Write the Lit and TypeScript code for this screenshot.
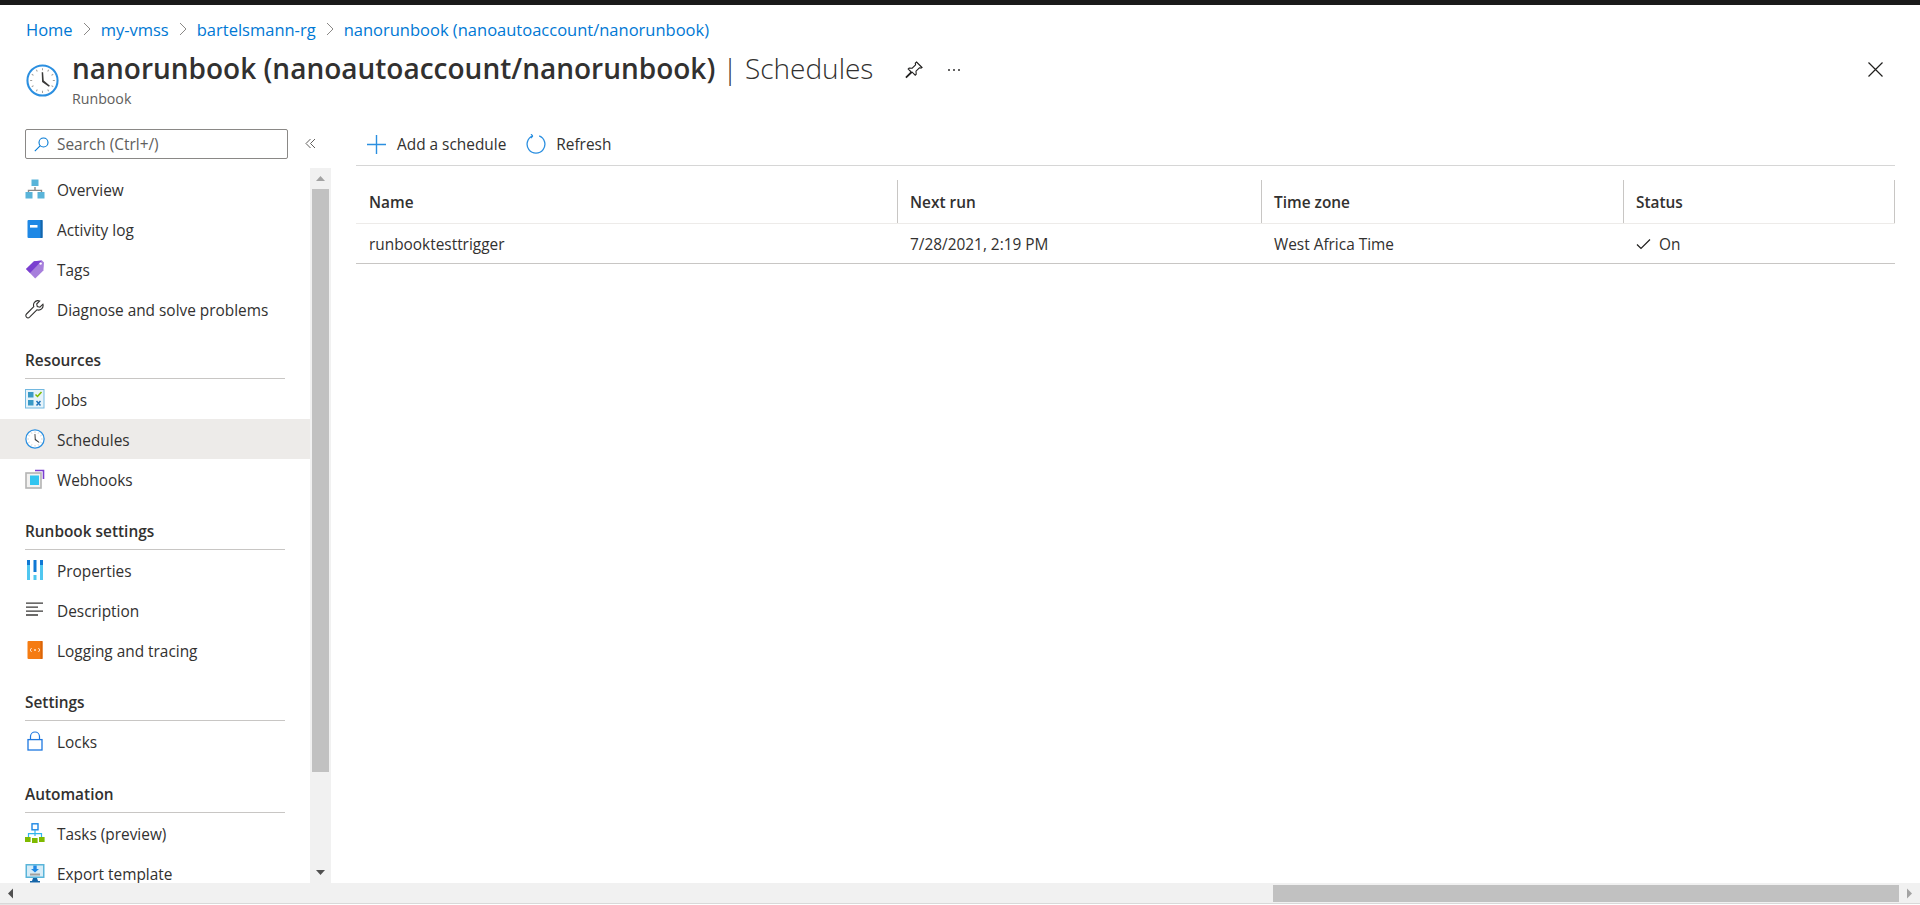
import { LitElement, html, css, svg } from 'lit';
import { customElement } from 'lit/decorators.js';

const clock = (s: number) => html`<svg width=${s} height=${s} viewBox="0 0 32 32">
  <circle cx="16" cy="16" r="14.6" fill="#fff" stroke="#2b8fe0" stroke-width="2"></circle>
  <path d="M16 4v2M16 26v2M4 16h2M26 16h2M10 5.6l1 1.7M22 5.6l-1 1.7M5.6 10l1.7 1M26.4 10l-1.7 1M5.6 22l1.7-1M26.4 22l-1.7-1M10 26.4l1-1.7M22 26.4l-1-1.7" stroke="#a19f9d" stroke-width="1"></path>
  <path d="M15.2 8h1.4l.6 8 6 5-1 1-6.6-4.6z" fill="#3b3a39"></path>
</svg>`;

const icons: Record<string, unknown> = {
  overview: html`<svg width="20" height="20" viewBox="0 0 20 20">
    <path d="M10 8v4M3.5 14v-2.6h13V14" fill="none" stroke="#8a8886" stroke-width="1.4"></path>
    <rect x="6.5" y="0.5" width="7" height="6.5" fill="#59b4d9"></rect>
    <rect x="0.5" y="13" width="7" height="6.5" fill="#59b4d9"></rect>
    <rect x="12.5" y="13" width="7" height="6.5" fill="#59b4d9"></rect>
  </svg>`,
  activity: html`<svg width="20" height="20" viewBox="0 0 20 20">
    <rect x="2.5" y="1" width="15" height="18" rx="1" fill="#1e88e5"></rect>
    <rect x="15.5" y="1" width="2" height="18" fill="#1565a8"></rect>
    <rect x="5" y="6" width="7.5" height="2.6" fill="#fff"></rect>
  </svg>`,
  tags: html`<svg width="20" height="20" viewBox="0 0 20 20">
    <path d="M1 10 9 2.2 17 1.6 19 3.6 18.4 11.6 10.2 19.4z" fill="#a77fdc"></path>
    <path d="M1 10 9 2.2 17 1.6 5 14z" fill="#7a3fd0"></path>
    <circle cx="15.6" cy="4.6" r="1.2" fill="#fff"></circle>
  </svg>`,
  wrench: html`<svg width="20" height="20" viewBox="0 0 20 20">
    <path d="M12.4 1.6a4.6 4.6 0 0 0-3.6 6.1L1.5 15a2.2 2.2 0 0 0 3.1 3.2l7.3-7.4a4.6 4.6 0 0 0 6-5.6l-3 3-2.6-.6-.6-2.6 3-3a4.6 4.6 0 0 0-2.3-.4z" fill="none" stroke="#323130" stroke-width="1.1"></path>
  </svg>`,
  jobs: html`<svg width="20" height="20" viewBox="0 0 20 20">
    <rect x="0.5" y="0.5" width="18.5" height="18.5" fill="#e6f3fa" stroke="#72b8e0"></rect>
    <rect x="3" y="3" width="5.5" height="5.5" fill="#3999c6"></rect>
    <rect x="3" y="11" width="5.5" height="5.5" fill="#3999c6"></rect>
    <path d="M10.5 5.5l2 2 4-4.5" fill="none" stroke="#7fba00" stroke-width="1.5"></path>
    <path d="M11.5 12l4 4.5M15.5 12l-4 4.5" stroke="#2072b8" stroke-width="1.5"></path>
  </svg>`,
  schedules: clock(20),
  webhooks: html`<svg width="20" height="20" viewBox="0 0 20 20">
    <path d="M10 1.5h8.5V10" fill="none" stroke="#7a3fd0" stroke-width="1.6"></path>
    <rect x="1" y="4" width="15" height="15" fill="#f3f2f1" stroke="#b3b3b3" stroke-width="1.6"></rect>
    <rect x="5" y="6.5" width="9" height="9.5" fill="#32c5f0"></rect>
  </svg>`,
  properties: html`<svg width="20" height="20" viewBox="0 0 20 20">
    <rect x="2" y="0" width="3" height="20" fill="#50c7f0"></rect>
    <rect x="2" y="0" width="3" height="5" fill="#0f78d4"></rect>
    <rect x="8.5" y="0" width="3" height="12" fill="#0f78d4"></rect>
    <rect x="8.5" y="15" width="3" height="5" fill="#50c7f0"></rect>
    <rect x="15" y="0" width="3" height="20" fill="#50c7f0"></rect>
    <rect x="15" y="0" width="3" height="5" fill="#0f78d4"></rect>
  </svg>`,
  description: html`<svg width="20" height="20" viewBox="0 0 20 20">
    <path d="M1 3.2h17M1 7.2h12M1 11.2h17M1 15h12" stroke="#3b3a39" stroke-width="1.3"></path>
  </svg>`,
  logging: html`<svg width="20" height="20" viewBox="0 0 20 20">
    <rect x="2.5" y="1" width="15" height="18" rx="1" fill="#f57c13"></rect>
    <rect x="15.5" y="1" width="2" height="18" fill="#d9650a"></rect>
    <path d="M6.6 8l-1.4 2 1.4 2M13.4 8l1.4 2-1.4 2" fill="none" stroke="#ffe3c7" stroke-width="1"></path>
    <circle cx="10" cy="10" r="1" fill="#ffe3c7"></circle>
  </svg>`,
  locks: html`<svg width="20" height="20" viewBox="0 0 20 20">
    <path d="M5.5 9V5.500a4.500 4.500 0 0 1 9 0V9" fill="none" stroke="#1e78e0" stroke-width="1.200"></path>
    <rect x="3" y="8.600" width="14" height="10.400" fill="#fff" stroke="#1e78e0" stroke-width="1.300"></rect>
  </svg>`,
  tasks: html`<svg width="20" height="20" viewBox="0 0 20 20">
    <rect x="7" y="0.800" width="6" height="6" fill="#fff" stroke="#1e88e5" stroke-width="1.400"></rect>
    <path d="M10 7v6M3.500 14v-3.400h13V14" fill="none" stroke="#32b5ea" stroke-width="1.200"></path>
    <rect x="0" y="14" width="5.600" height="5" fill="#7fba00"></rect>
    <rect x="7" y="15" width="5.600" height="5" fill="#7fba00"></rect>
    <rect x="14" y="14" width="5.600" height="5" fill="#7fba00"></rect>
  </svg>`,
  export: html`<svg width="20" height="20" viewBox="0 0 20 20">
    <rect x="0.500" y="1" width="19" height="14" fill="#59b4d9"></rect>
    <rect x="2" y="2.500" width="16" height="11" fill="#d6ecf7"></rect>
    <path d="M8.300 2.500h3.400v3.600h2.300L10 9.600 6 6.100h2.300z" fill="#1e88e5"></path>
    <rect x="5" y="10.500" width="10" height="2" fill="#a19f9d"></rect>
    <path d="M8 15h4l1 3H7z" fill="#1565a8"></path>
    <rect x="5" y="18" width="10" height="1.500" fill="#1565a8"></rect>
  </svg>`,
};

type Entry = { section?: string; h?: number; label?: string; icon?: string; active?: boolean };

const nav: Entry[] = [
  { label: 'Overview', icon: 'overview' },
  { label: 'Activity log', icon: 'activity' },
  { label: 'Tags', icon: 'tags' },
  { label: 'Diagnose and solve problems', icon: 'wrench' },
  { section: 'Resources', h: 50 },
  { label: 'Jobs', icon: 'jobs' },
  { label: 'Schedules', icon: 'schedules', active: true },
  { label: 'Webhooks', icon: 'webhooks' },
  { section: 'Runbook settings', h: 51 },
  { label: 'Properties', icon: 'properties' },
  { label: 'Description', icon: 'description' },
  { label: 'Logging and tracing', icon: 'logging' },
  { section: 'Settings', h: 51 },
  { label: 'Locks', icon: 'locks' },
  { section: 'Automation', h: 52 },
  { label: 'Tasks (preview)', icon: 'tasks' },
  { label: 'Export template', icon: 'export' },
];

const crumbs = ['Home', 'my-vmss', 'bartelsmann-rg', 'nanorunbook (nanoautoaccount/nanorunbook)'];

const arrow = (d: string, fill = '#a3a3a3') =>
  html`<svg width="11" height="11" viewBox="0 0 11 11">${svg`<path d=${d} fill=${fill}></path>`}</svg>`;

@customElement('app-root')
export class AppRoot extends LitElement {
  static styles = css`
    :host {
      display: flex;
      flex-direction: column;
      height: 905px;
      overflow: hidden;
      background: #fff;
      color: #323130;
      font-family: 'Open Sans', 'Noto Sans', sans-serif;
      font-size: 15.4px;
    }
    .topbar { height: 5px; background: #1a1a1a; flex: none; }

    .crumbs {
      flex: none;
      height: 48px;
      padding-left: 26px;
      display: flex;
      align-items: center;
      gap: 10px;
      color: #0078d4;
      font-size: 16.5px;
    }
    .crumbs svg { flex: none; }

    .head {
      flex: none;
      height: 66px;
      display: flex;
      padding-left: 26px;
      position: relative;
    }
    .head .ico { margin-top: 11px; flex: none; height: 32px; }
    .titles { margin-left: 13px; }
    .title {
      font-size: 28px;
      line-height: 34px;
      white-space: nowrap;
      margin-top: -2px;
    }
    .title b { font-weight: 600; }
    .title span { font-weight: 300; }
    .sub { font-size: 14.2px; line-height: 16px; color: #605e5c; margin-top: 6px; }
    .head-acts { display: flex; align-items: flex-start; gap: 24px; margin-left: 32px; padding-top: 8px; }
    .close { margin-left: auto; margin-right: 37px; padding-top: 8px; }

    .body { flex: 1; display: flex; min-height: 0; }

    .side { width: 331px; flex: none; display: flex; flex-direction: column; min-height: 0; }
    .search-row { flex: none; height: 49px; box-sizing: border-box; padding: 10px 0 0 25px; display: flex; align-items: flex-start; }
    .search {
      width: 263px;
      height: 30px;
      box-sizing: border-box;
      border: 1px solid #8a8886;
      border-radius: 2px;
      display: flex;
      align-items: center;
      gap: 8px;
      padding-left: 8px;
      color: #605e5c;
    }
    .collapse { margin: 9px 0 0 17px; }

    .scroller { flex: 1; display: flex; min-height: 0; }
    .list { width: 310px; flex: none; overflow: hidden; padding-top: 1px; }
    .item {
      height: 40px;
      display: flex;
      align-items: center;
      padding-left: 25px;
      gap: 12px;
      white-space: nowrap;
    }
    .item span { position: relative; top: 1px; }
    .item svg { flex: none; width: 20px; height: 20px; }
    .item.active { background: #edebe9; }
    .section {
      margin-left: 25px;
      width: 260px;
      box-sizing: border-box;
      border-bottom: 1px solid #c8c6c4;
      display: flex;
      align-items: flex-end;
      padding-bottom: 7px;
      font-weight: 600;
    }

    .vbar { width: 21px; flex: none; background: #f1f1f1; display: flex; flex-direction: column; align-items: center; }
    .vbar .btn { height: 21px; flex: none; display: flex; align-items: center; justify-content: center; }
    .vbar .thumb { width: 17px; height: 583px; background: #c1c1c1; flex: none; }
    .vbar .rest { flex: 1; }

    .main { flex: 1; min-width: 0; margin: 0 25px; display: flex; flex-direction: column; }
    .toolbar {
      flex: none;
      height: 47px;
      box-sizing: border-box;
      border-bottom: 1px solid #d6d6d6;
      display: flex;
      align-items: flex-start;
      padding: 15px 0 0 11px;
    }
    .tool { display: flex; align-items: center; gap: 11px; height: 20px; }
    .tool + .tool { margin-left: 20px; gap: 10px; }

    .grid { display: grid; grid-template-columns: 542px 364px 362px 271px; }
    .th {
      height: 58px;
      box-sizing: border-box;
      border-bottom: 1px solid #edebe9;
      display: flex;
      align-items: center;
      padding: 15px 0 0 13px;
      font-weight: 600;
      position: relative;
    }
    .th + .th { padding-left: 12px; }
    .th::after {
      content: '';
      position: absolute;
      right: 0;
      bottom: 0;
      height: 43px;
      width: 1px;
      background: #c8c6c4;
    }
    .td {
      height: 40px;
      box-sizing: border-box;
      border-bottom: 1px solid #c8c6c4;
      display: flex;
      align-items: center;
      padding: 1px 0 0 13px;
      gap: 8px;
    }
    .td + .td { padding-left: 12px; }

    .hbar {
      flex: none;
      height: 20px;
      background: #f1f1f1;
      display: flex;
      align-items: center;
    }
    .hbar .btn { width: 21px; display: flex; justify-content: center; flex: none; }
    .hbar .track { flex: 1; padding-left: 1252px; }
    .hbar .thumb { height: 17px; background: #c1c1c1; }
    .strip { flex: none; height: 2px; display: flex; background: #fff; border-top: 1px solid #d9d9d9; box-sizing: border-box; }
    .strip i { width: 60px; background: #e6e6e6; }
  `;

  renderNav(n: Entry) {
    if (n.section) {
      return html`<div class="section" style="height:${n.h}px">${n.section}</div>`;
    }
    return html`<div class="item ${n.active ? 'active' : ''}">${icons[n.icon!]}<span>${n.label}</span></div>`;
  }

  render() {
    return html`
      <div class="topbar"></div>
      <div class="crumbs">
        ${crumbs.map(
          (c, i) => html`${i > 0
            ? html`<svg width="8" height="14" viewBox="0 0 8 14"><path d="M1 1l6 6-6 6" fill="none" stroke="#8a8886" stroke-width="1"></path></svg>`
            : ''}<span>${c}</span>`
        )}
      </div>
      <div class="head">
        <div class="ico">${clock(33)}</div>
        <div class="titles">
          <div class="title"><b>nanorunbook (nanoautoaccount/nanorunbook)</b><span> | Schedules</span></div>
          <div class="sub">Runbook</div>
        </div>
        <div class="head-acts">
          <svg width="18" height="18" viewBox="0 0 18 18"><path d="M11.500 1l5.500 5.500-1 .6-1.600-.3-3.400 3.400.2 3-1 1-3-3L1.500 16.500l-.4-.4L6.200 11l-3-3 1-1 3 .2 3.400-3.400-.3-1.600z" fill="none" stroke="#201f1e" stroke-width="1.100"></path></svg>
          <svg width="14" height="18" viewBox="0 0 14 18"><g fill="#323130"><circle cx="2" cy="9" r="1"></circle><circle cx="7" cy="9" r="1"></circle><circle cx="12" cy="9" r="1"></circle></g></svg>
        </div>
        <div class="close">
          <svg width="15" height="15" viewBox="0 0 15 15"><path d="M.5.5l14 14M14.500.5l-14 14" stroke="#201f1e" stroke-width="1.200"></path></svg>
        </div>
      </div>
      <div class="body">
        <div class="side">
          <div class="search-row">
            <div class="search">
              <svg width="15" height="15" viewBox="0 0 15 15"><circle cx="9.500" cy="5.500" r="4.500" fill="none" stroke="#0078d4" stroke-width="1.100"></circle><path d="M6.300 8.700L.8 14.200" stroke="#0078d4" stroke-width="1.100"></path></svg>
              <span>Search (Ctrl+/)</span>
            </div>
            <svg class="collapse" width="11" height="11" viewBox="0 0 11 11"><path d="M5.500 1l-4.500 4.500 4.500 4.500M10 1L5.500 5.500 10 10" fill="none" stroke="#605e5c" stroke-width="1"></path></svg>
          </div>
          <div class="scroller">
            <div class="list">${nav.map(n => this.renderNav(n))}</div>
            <div class="vbar">
              <div class="btn">${arrow('M1 8L5.500 3 10 8z')}</div>
              <div class="thumb"></div>
              <div class="rest"></div>
              <div class="btn">${arrow('M1 3l4.500 5L10 3z', '#505050')}</div>
            </div>
          </div>
        </div>
        <div class="main">
          <div class="toolbar">
            <div class="tool">
              <svg width="19" height="19" viewBox="0 0 19 19"><path d="M9.500 0v19M0 9.500h19" stroke="#2b8fe0" stroke-width="1.400"></path></svg>
              <span>Add a schedule</span>
            </div>
            <div class="tool">
              <svg width="20" height="20" viewBox="0 0 20 20"><path d="M13.200 1.900a8.900 8.900 0 1 1-6.400 0" fill="none" stroke="#2b8fe0" stroke-width="1.300"></path><path d="M6.800 1.900L5 .2M6.800 1.900L5 4.200" fill="none" stroke="#2b8fe0" stroke-width="1.200"></path></svg>
              <span>Refresh</span>
            </div>
          </div>
          <div class="grid">
            <div class="th">Name</div>
            <div class="th">Next run</div>
            <div class="th">Time zone</div>
            <div class="th">Status</div>
            <div class="td">runbooktesttrigger</div>
            <div class="td">7/28/2021, 2:19 PM</div>
            <div class="td">West Africa Time</div>
            <div class="td">
              <svg width="15" height="12" viewBox="0 0 15 12"><path d="M1 6.500l4 4L14 1.500" fill="none" stroke="#201f1e" stroke-width="1.200"></path></svg>
              <span>On</span>
            </div>
          </div>
        </div>
      </div>
      <div class="hbar">
        <div class="btn">${arrow('M8 .5L3 5.500l5 5z', '#505050')}</div>
        <div class="track"><div class="thumb"></div></div>
        <div class="btn">${arrow('M3 .5l5 5-5 5z')}</div>
      </div>
      <div class="strip"><i></i></div>
    `;
  }
}
